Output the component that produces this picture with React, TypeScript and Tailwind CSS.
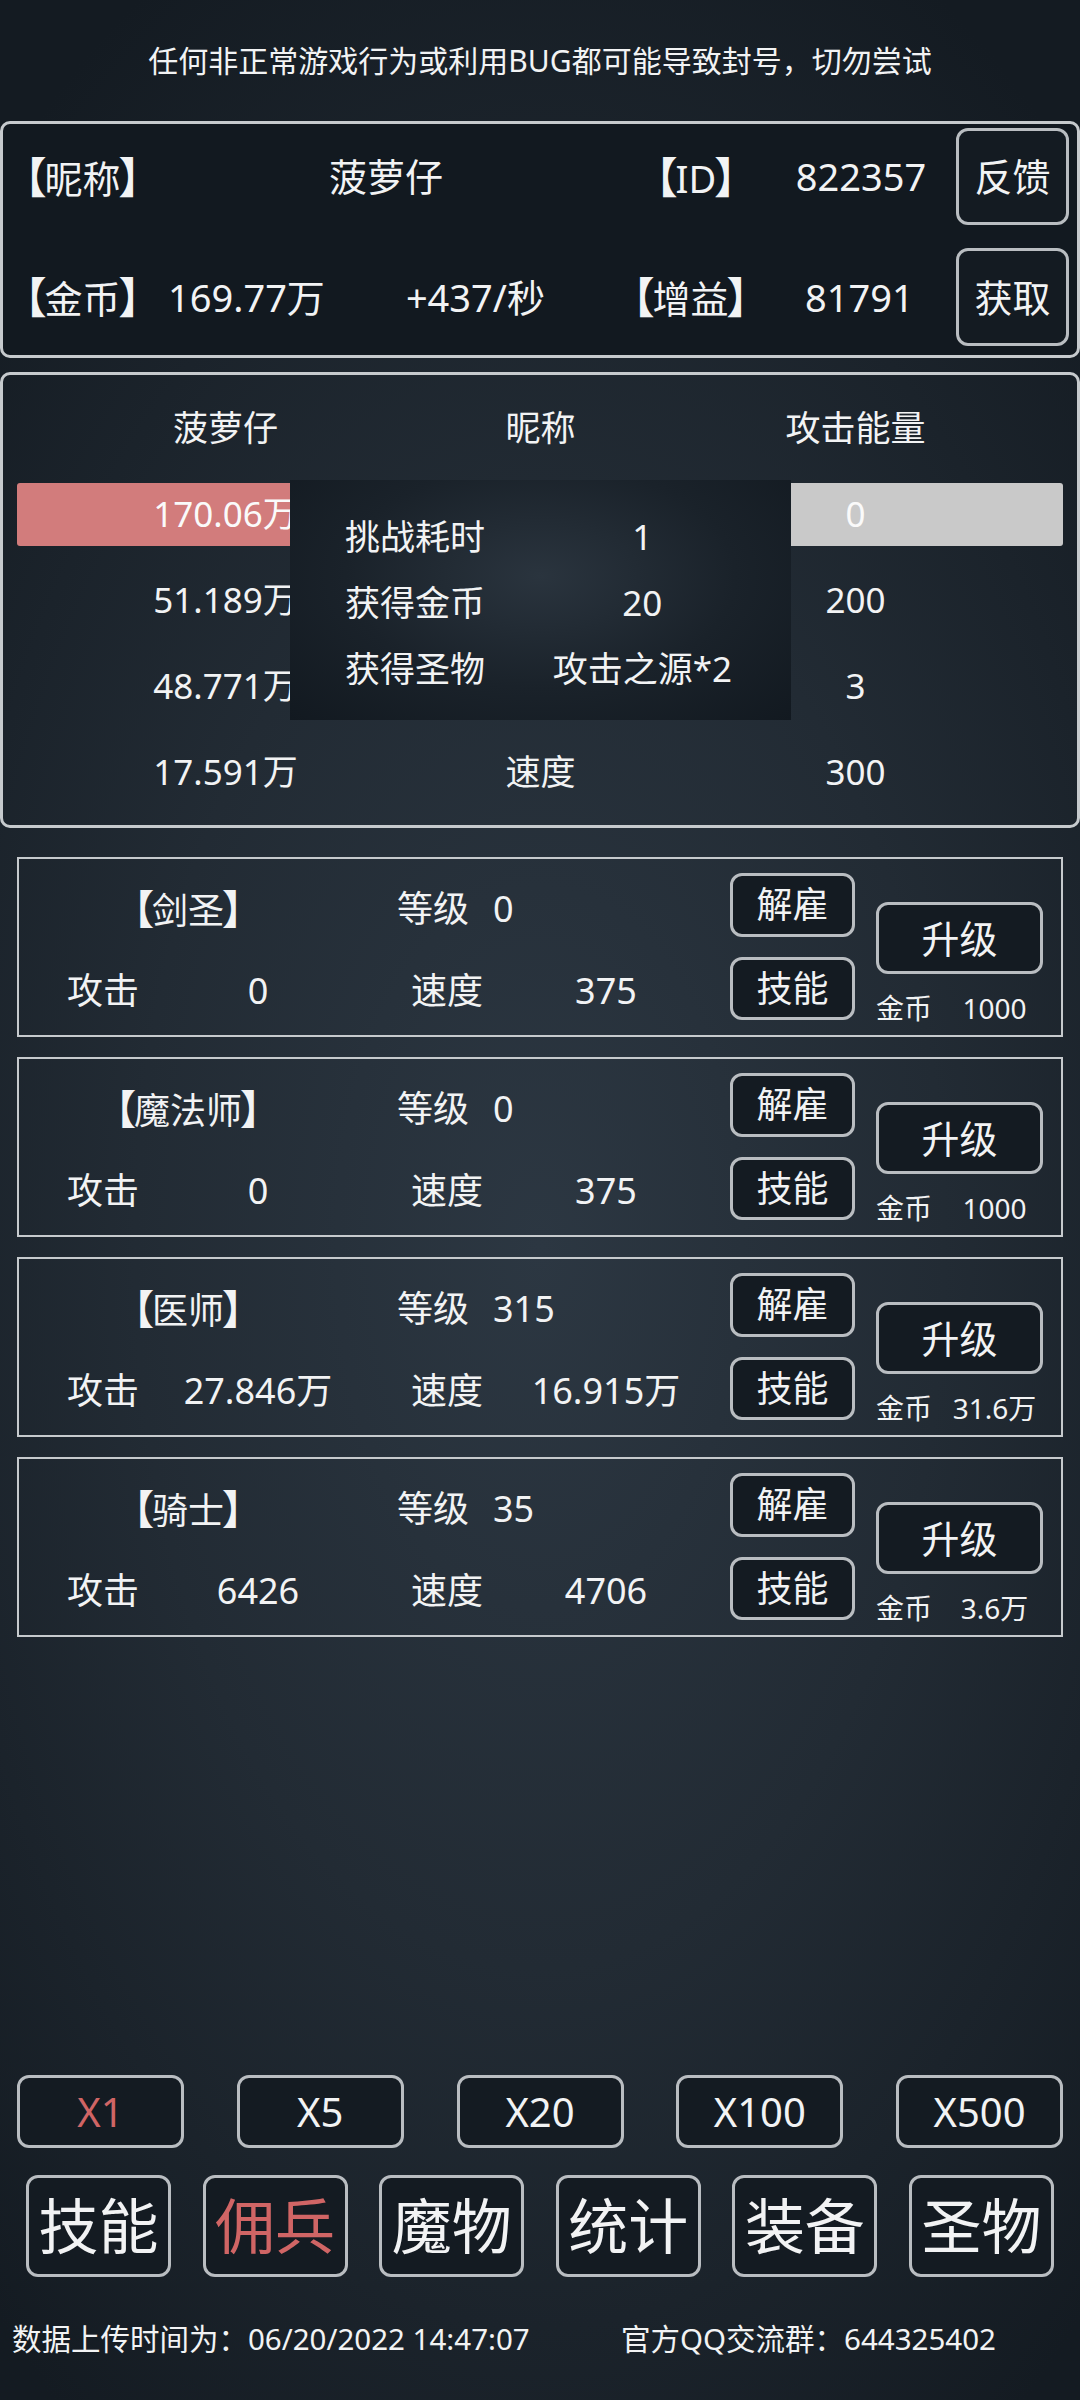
const heroes = [
  { name: "剑圣", level: "0", atk: "0", spd: "375", cost: "1000" },
  { name: "魔法师", level: "0", atk: "0", spd: "375", cost: "1000" },
  { name: "医师", level: "315", atk: "27.846万", spd: "16.915万", cost: "31.6万" },
  { name: "骑士", level: "35", atk: "6426", spd: "4706", cost: "3.6万" },
];

const multipliers = ["X1", "X5", "X20", "X100", "X500"];
const tabs = ["技能", "佣兵", "魔物", "统计", "装备", "圣物"];

const btn = "rounded-[12px] border-[3px] border-[#b9bdc1] bg-[#141b22] whitespace-nowrap";

// heavy brackets like the game font
const Tag = ({ children }: { children: string }) => (
  <>
    <span className="text-[1.12em] font-bold -mr-[2px] -ml-[3px]">【</span>
    {children}
    <span className="text-[1.12em] font-bold -ml-[2px] -mr-[3px]">】</span>
  </>
);

const HeroCard = ({ hero }: { hero: (typeof heroes)[number] }) => {
  return (
    <div className="mx-[17px] h-[180px] border-2 border-[#c6cacd] flex whitespace-nowrap">
      <div className="w-[711px] flex flex-col text-[36px]">
        <div className="h-[60px] mt-[20px] flex items-center">
          <span className="w-[338px] text-center">
            <Tag>{hero.name}</Tag>
          </span>
          <span className="ml-[40px]">等级</span>
          <span className="ml-[24px]">{hero.level}</span>
        </div>
        <div className="h-[60px] mt-[22px] flex items-center">
          <span className="ml-[48px] w-[72px]">攻击</span>
          <span className="w-[238px] text-center">{hero.atk}</span>
          <span className="ml-[34px] w-[72px]">速度</span>
          <span className="w-[246px] text-center">{hero.spd}</span>
        </div>
      </div>
      <div className="w-[125px] flex flex-col text-[36px]">
        <button className={`mt-[14px] h-[64px] ${btn}`}>解雇</button>
        <button className={`mt-[20px] h-[63px] ${btn}`}>技能</button>
      </div>
      <div className="ml-[21px] w-[167px] flex flex-col">
        <button className={`mt-[43px] h-[72px] text-[38px] ${btn}`}>升级</button>
        <div className="mt-[15px] h-[38px] flex items-center text-[28px]">
          <span className="w-[58px]">金币</span>
          <span className="ml-[14px] w-[110px] text-center">{hero.cost}</span>
        </div>
      </div>
    </div>
  );
};

const BattleRow = ({ cells }: { cells: string[] }) => (
  <div className="h-[86px] pl-[65px] grid grid-cols-[315px_315px_315px] items-center text-center whitespace-nowrap">
    {cells.map((c, i) => (
      <span key={i}>{c}</span>
    ))}
  </div>
);

const App = () => {
  return (
    <div className="w-[1080px] h-[2400px] flex flex-col text-[#f2f3f4] font-['Noto_Sans','Noto_Sans_CJK_SC',sans-serif] bg-[radial-gradient(ellipse_75%_60%_at_50%_52%,#2c3742_0%,#222b34_50%,#141b22_100%)]">
      <div className="h-[121px] flex items-center justify-center text-[30px] whitespace-nowrap">
        任何非正常游戏行为或利用BUG都可能导致封号，切勿尝试
      </div>

      {/* player info */}
      <div className="h-[237px] border-[3px] border-[#c6cacd] rounded-[10px] bg-[#121920] pt-[4px] pr-[8px] flex flex-col gap-[23px] text-[38px] whitespace-nowrap">
        <div className="h-[97px] flex items-center">
          <span className="ml-[4px] w-[157px]">
            <Tag>昵称</Tag>
          </span>
          <span className="w-[444px] text-center">菠萝仔</span>
          <span className="ml-[30px]">
            <Tag>ID</Tag>
          </span>
          <span className="ml-[42px]">822357</span>
          <button className={`ml-auto w-[113px] h-[97px] ${btn}`}>反馈</button>
        </div>
        <div className="h-[98px] flex items-center">
          <span className="ml-[4px] w-[157px]">
            <Tag>金币</Tag>
          </span>
          <span className="ml-[4px]">169.77万</span>
          <span className="ml-[81px]">+437/秒</span>
          <span className="ml-[70px]">
            <Tag>增益</Tag>
          </span>
          <span className="ml-[39px]">81791</span>
          <button className={`ml-auto w-[113px] h-[98px] ${btn}`}>获取</button>
        </div>
      </div>

      {/* battle */}
      <div className="relative mt-[14px] h-[456px] border-[3px] border-[#c6cacd] rounded-[10px] pt-[10px] text-[35px]">
        <BattleRow cells={["菠萝仔", "昵称", "攻击能量"]} />
        <div className="h-[86px] flex items-center">
          <div className="mx-[14px] flex-1 h-[63px] rounded-[3px] pl-[51px] grid grid-cols-[315px_315px_315px] items-center text-center text-[#fafafa] whitespace-nowrap bg-[linear-gradient(to_right,#d27c7c_0%,#d27c7c_45%,#c9c9c9_45%)]">
            <span>170.06万</span>
            <span></span>
            <span>0</span>
          </div>
        </div>
        <BattleRow cells={["51.189万", "", "200"]} />
        <BattleRow cells={["48.771万", "", "3"]} />
        <BattleRow cells={["17.591万", "速度", "300"]} />

        {/* result tooltip */}
        <div className="absolute left-[287px] top-[105px] w-[501px] h-[240px] pt-[24px] whitespace-nowrap bg-[radial-gradient(ellipse_at_50%_40%,#2a343e_0%,#1a222a_55%,#121920_100%)]">
          {[
            ["挑战耗时", "1"],
            ["获得金币", "20"],
            ["获得圣物", "攻击之源*2"],
          ].map(([k, v]) => (
            <div key={k} className="h-[66px] pl-[55px] flex items-center">
              <span className="w-[150px]">{k}</span>
              <span className="w-[300px] text-center">{v}</span>
            </div>
          ))}
        </div>
      </div>

      {/* hero list */}
      <div className="mt-[29px] flex flex-col gap-[20px]">
        {heroes.map((h) => (
          <HeroCard key={h.name} hero={h} />
        ))}
      </div>

      <div className="mt-auto">
        <div className="px-[17px] flex justify-between">
          {multipliers.map((m, i) => (
            <button
              key={m}
              className={
                i === 0
                  ? `w-[167px] h-[73px] text-[40px] text-[#d06565] ${btn}`
                  : `w-[167px] h-[73px] text-[40px] ${btn}`
              }
            >
              {m}
            </button>
          ))}
        </div>
        <div className="mt-[27px] px-[26px] flex justify-between">
          {tabs.map((t, i) => (
            <button
              key={t}
              className={
                i === 1
                  ? `w-[145px] h-[102px] text-[60px] text-[#d06565] ${btn}`
                  : `w-[145px] h-[102px] text-[60px] ${btn}`
              }
            >
              {t}
            </button>
          ))}
        </div>
        <div className="mt-[32px] h-[60px] mb-[31px] flex items-center text-[29.5px] whitespace-nowrap">
          <span className="ml-[12px] w-[609px]">数据上传时间为：06/20/2022 14:47:07</span>
          <span>官方QQ交流群：644325402</span>
        </div>
      </div>
    </div>
  );
};

export default App;
